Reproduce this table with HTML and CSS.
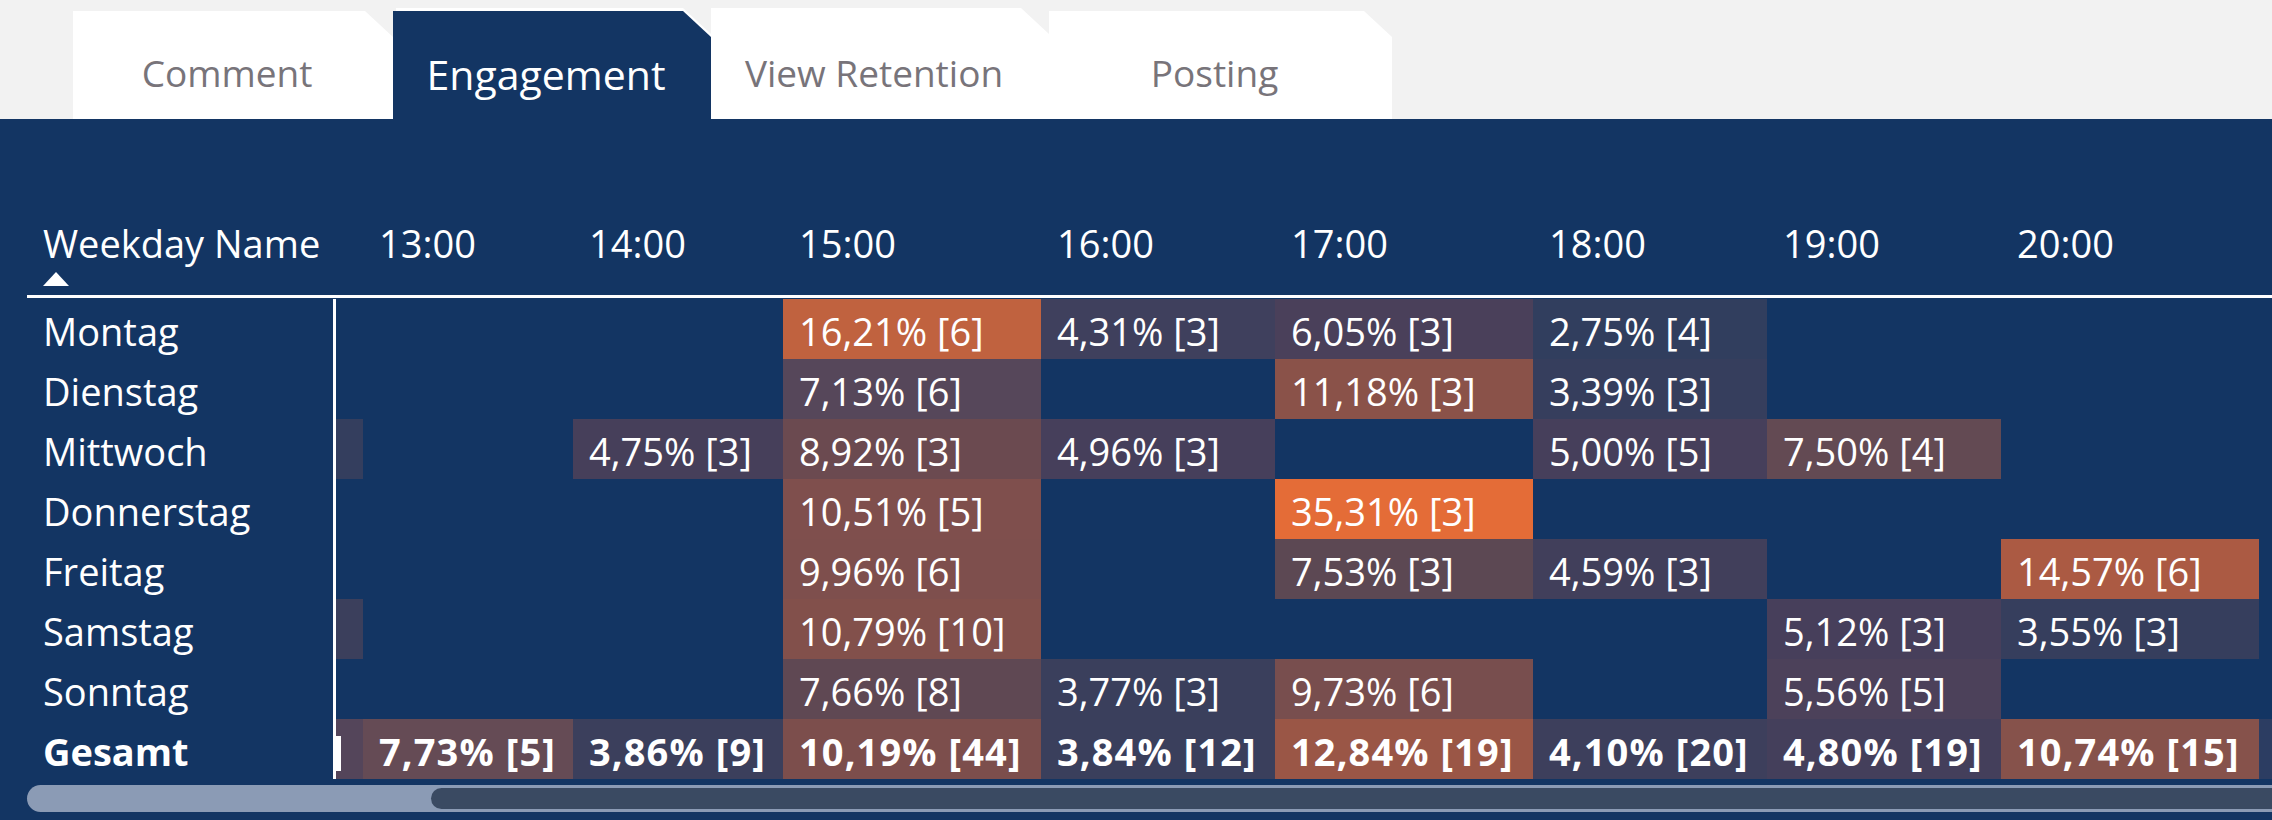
FILE: index.html
```html
<!DOCTYPE html>
<html lang="de">
<head>
<meta charset="utf-8">
<title>Engagement</title>
<link rel="stylesheet" href="styles.css">
</head>
<body>
<div class="tabs">
  <div class="tab"><span class="label">Comment</span></div>
  <div class="tab active"><span class="label">Engagement</span></div>
  <div class="tab tall"><span class="label">View Retention</span></div>
  <div class="tab wide"><span class="label">Posting</span></div>
</div>
<div class="panel">
  <div class="matrix">
    <div class="row head">
      <div class="rh"><span>Weekday Name</span><i class="sort"></i></div>
      <div class="gap"></div>
      <div class="gap"></div>
      <div class="hc">13:00</div>
      <div class="hc">14:00</div>
      <div class="hc">15:00</div>
      <div class="hc">16:00</div>
      <div class="hc">17:00</div>
      <div class="hc">18:00</div>
      <div class="hc">19:00</div>
      <div class="hc">20:00</div>
      <div class="gap"></div>
    </div>

    <div class="row">
      <div class="rl">Montag</div><div class="sep"></div>
      <div class="c"></div>
      <div class="c"></div>
      <div class="c"></div>
      <div class="c" style="background:#c0623f">16,21% [6]</div>
      <div class="c" style="background:#3f405d">4,31% [3]</div>
      <div class="c" style="background:#4a405a">6,05% [3]</div>
      <div class="c" style="background:#313e5e">2,75% [4]</div>
      <div class="c"></div>
      <div class="c"></div>
      <div class="c"></div>
    </div>

    <div class="row">
      <div class="rl">Dienstag</div><div class="sep"></div>
      <div class="c"></div>
      <div class="c"></div>
      <div class="c"></div>
      <div class="c" style="background:#56475a">7,13% [6]</div>
      <div class="c"></div>
      <div class="c" style="background:#8a5249">11,18% [3]</div>
      <div class="c" style="background:#363e5d">3,39% [3]</div>
      <div class="c"></div>
      <div class="c"></div>
      <div class="c"></div>
    </div>

    <div class="row">
      <div class="rl">Mittwoch</div><div class="sep"></div>
      <div class="c" style="background:#343e5e"></div>
      <div class="c"></div>
      <div class="c" style="background:#463f5a">4,75% [3]</div>
      <div class="c" style="background:#6b4a50">8,92% [3]</div>
      <div class="c" style="background:#463f5b">4,96% [3]</div>
      <div class="c"></div>
      <div class="c" style="background:#463f5b">5,00% [5]</div>
      <div class="c" style="background:#634a53">7,50% [4]</div>
      <div class="c"></div>
      <div class="c"></div>
    </div>

    <div class="row">
      <div class="rl">Donnerstag</div><div class="sep"></div>
      <div class="c"></div>
      <div class="c"></div>
      <div class="c"></div>
      <div class="c" style="background:#7f4f4d">10,51% [5]</div>
      <div class="c"></div>
      <div class="c" style="background:#e46c37">35,31% [3]</div>
      <div class="c"></div>
      <div class="c"></div>
      <div class="c"></div>
      <div class="c"></div>
    </div>

    <div class="row">
      <div class="rl">Freitag</div><div class="sep"></div>
      <div class="c"></div>
      <div class="c"></div>
      <div class="c"></div>
      <div class="c" style="background:#7e4f4d">9,96% [6]</div>
      <div class="c"></div>
      <div class="c" style="background:#5c4853">7,53% [3]</div>
      <div class="c" style="background:#413f5b">4,59% [3]</div>
      <div class="c"></div>
      <div class="c" style="background:#ab5a43">14,57% [6]</div>
      <div class="c"></div>
    </div>

    <div class="row">
      <div class="rl">Samstag</div><div class="sep"></div>
      <div class="c" style="background:#3b3f5c"></div>
      <div class="c"></div>
      <div class="c"></div>
      <div class="c" style="background:#82504b">10,79% [10]</div>
      <div class="c"></div>
      <div class="c"></div>
      <div class="c"></div>
      <div class="c" style="background:#473f5b">5,12% [3]</div>
      <div class="c" style="background:#363e5d">3,55% [3]</div>
      <div class="c"></div>
    </div>

    <div class="row">
      <div class="rl">Sonntag</div><div class="sep"></div>
      <div class="c"></div>
      <div class="c"></div>
      <div class="c"></div>
      <div class="c" style="background:#5f4853">7,66% [8]</div>
      <div class="c" style="background:#3a3f5c">3,77% [3]</div>
      <div class="c" style="background:#784e4e">9,73% [6]</div>
      <div class="c"></div>
      <div class="c" style="background:#4c415a">5,56% [5]</div>
      <div class="c"></div>
      <div class="c"></div>
    </div>

    <div class="row total">
      <div class="rl">Gesamt</div><div class="sep"></div>
      <div class="c stubcell" style="background:#54455a"><i class="stub"></i></div>
      <div class="c" style="background:#654b55">7,73% [5]</div>
      <div class="c" style="background:#3b3f5c">3,86% [9]</div>
      <div class="c" style="background:#7c4e4c">10,19% [44]</div>
      <div class="c" style="background:#3a3f5c">3,84% [12]</div>
      <div class="c" style="background:#9a5646">12,84% [19]</div>
      <div class="c" style="background:#3d3f5c">4,10% [20]</div>
      <div class="c" style="background:#443f5b">4,80% [19]</div>
      <div class="c" style="background:#86524b">10,74% [15]</div>
      <div class="c" style="background:#2c3d62"></div>
    </div>
  </div>
  <div class="scroll"><div class="thumb"></div></div>
</div>
</body>
</html>
```

FILE: styles.css
```css
html, body {
  margin: 0;
  padding: 0;
}

body {
  width: 2272px;
  height: 820px;
  overflow: hidden;
  background: #f2f2f2;
  font-family: "Segoe UI", "Open Sans", "Noto Sans", sans-serif;
  color: #ffffff;
}

/* ---------- tab strip ---------- */
.tabs {
  height: 119px;
  box-sizing: border-box;
  padding-left: 73px;
  display: flex;
  align-items: flex-end;
  background: #f2f2f2;
}

.tab {
  position: relative;
  width: 320px;
  height: 108px;
  box-sizing: border-box;
  display: flex;
  align-items: flex-end;
  justify-content: center;
  padding: 0 12px 21px 0;
  background: #ffffff;
  clip-path: polygon(0 0, calc(100% - 28px) 0, 100% 26px, 100% 100%, 0 100%);
  font-size: 37px;
  line-height: 50px;
  color: #78747a;
  white-space: nowrap;
}

.tab.tall {
  width: 338px;
  height: 111px;
}

.tab.wide {
  width: 343px;
}

.tab.active {
  width: 318px;
  background: transparent;
  clip-path: none;
  color: #ffffff;
  font-size: 41px;
  line-height: 54px;
  padding-bottom: 18px;
}

.tab.active::before,
.tab.active::after {
  content: "";
  position: absolute;
  clip-path: polygon(0 0, calc(100% - 28px) 0, 100% 26px, 100% 100%, 0 100%);
}

.tab.active::before {
  left: 3px;
  right: 0;
  top: -3px;
  bottom: 0;
  background: #ffffff;
}

.tab.active::after {
  inset: 0;
  background: #133563;
}

.label {
  position: relative;
  z-index: 1;
}

/* ---------- panel / matrix ---------- */
.panel {
  height: 701px;
  box-sizing: border-box;
  padding-left: 27px;
  background: #133563;
  overflow: hidden;
}

.row {
  display: grid;
  grid-template-columns: 306px 3px 27px 210px 210px 258px 234px 258px 234px 234px 258px 1fr;
  height: 60px;
  font-size: 38px;
  line-height: 56px;
}

.row.head {
  height: auto;
  border-bottom: 3px solid #ffffff;
  margin-bottom: 1px;
  line-height: 50px;
}

.row.head > div {
  padding-top: 99px;
}

.rh {
  padding-left: 16px;
  padding-bottom: 9px;
  display: flex;
  flex-direction: column;
  align-items: flex-start;
  white-space: nowrap;
}

.sort {
  display: block;
  width: 0;
  height: 0;
  margin-top: 4px;
  border-left: 13.5px solid transparent;
  border-right: 13.5px solid transparent;
  border-bottom: 14px solid #ffffff;
}

.hc {
  padding-left: 16px;
  white-space: nowrap;
}

.rl {
  padding: 4px 0 0 16px;
  white-space: nowrap;
}

.sep {
  background: #ffffff;
}

.c {
  padding: 4px 0 0 16px;
  white-space: nowrap;
  overflow: hidden;
}

.total {
  font-weight: 700;
}

.total .c {
  letter-spacing: 1.1px;
}

.c.stubcell {
  padding: 0;
}

.stub {
  display: block;
  width: 5px;
  height: 35px;
  margin-top: 17px;
  background: #ffffff;
}

/* ---------- scrollbar ---------- */
.scroll {
  margin-top: 6px;
  height: 27px;
  box-sizing: border-box;
  padding: 3px 0 3px 404px;
  background: #8b9bb5;
  border-radius: 13.5px 0 0 13.5px;
}

.thumb {
  height: 21px;
  background: #3a4a62;
  border-radius: 10.5px 0 0 10.5px;
}
```
